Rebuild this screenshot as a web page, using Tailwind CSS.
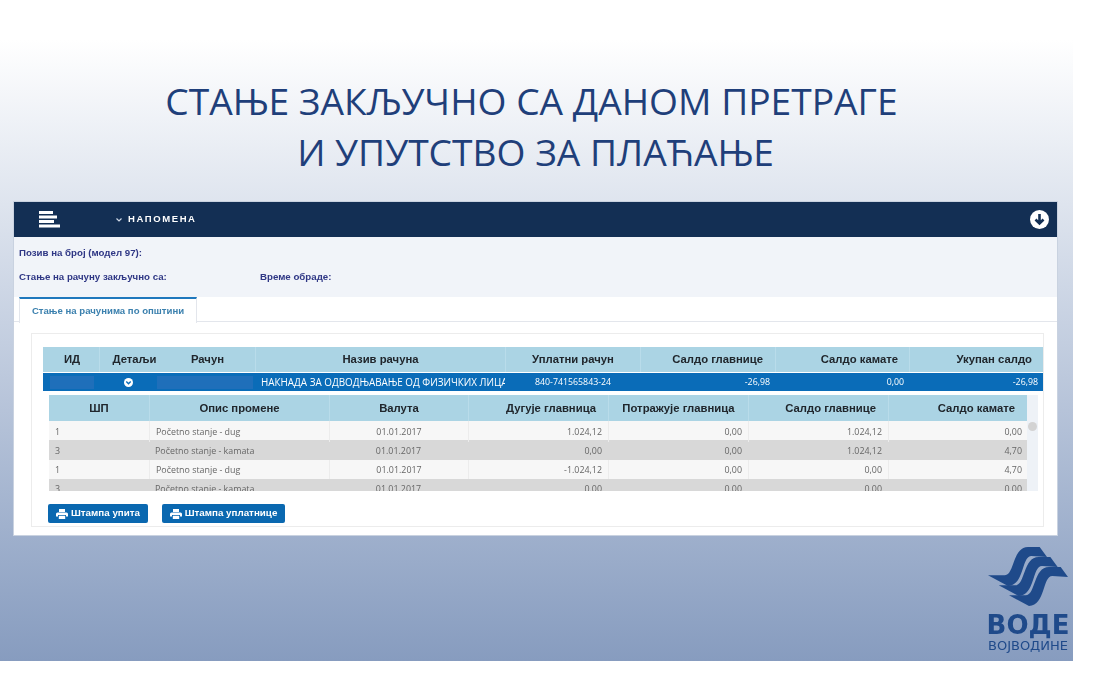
<!DOCTYPE html>
<html lang="en">
<head>
  <meta charset="UTF-8" />
  <title>Стање закључно са даном претраге</title>
  <script src="https://cdn.jsdelivr.net/npm/@tailwindcss/browser@4"></script>
</head>
<body class="bg-white">
  <div class="w-[1073px] h-[661px] overflow-hidden pt-[75px] bg-linear-to-b from-white from-[6%] to-[#879cbf]">

    <!-- Title -->
    <h1 class="text-center text-[#1f3f7a] text-[37.2px] leading-[51px] font-['Open_Sans',sans-serif]">
      <span class="block pr-[10px]">СТАЊЕ ЗАКЉУЧНО СА ДАНОМ ПРЕТРАГЕ</span>
      <span class="block pr-[2px]">И УПУТСТВО ЗА ПЛАЋАЊЕ</span>
    </h1>

    <!-- Screenshot card -->
    <div class="ml-[13px] mt-[24px] w-[1045px] h-[335px] bg-white border border-[#c9d2e0] font-['Liberation_Sans',sans-serif] blur-[0.4px]">

      <!-- Top bar -->
      <div class="h-[35px] bg-[#132f54] flex items-center text-white">
        <svg class="ml-[25px]" width="21" height="17" viewBox="0 0 21 17" fill="#fff">
          <rect x="0" y="0" width="14" height="3" />
          <rect x="0" y="4.5" width="18" height="3" />
          <rect x="0" y="9" width="15" height="3" />
          <rect x="0" y="13.5" width="21" height="3" />
        </svg>
        <svg class="ml-[56px]" width="6" height="4" viewBox="0 0 6 4" fill="none" stroke="#cfd8e6" stroke-width="1.2"><path d="M0.5 0.5L3 3L5.5 0.5" /></svg>
        <span class="ml-[6px] text-[9.5px] font-bold tracking-[1.6px]">НАПОМЕНА</span>
        <svg class="ml-auto mr-[8px]" width="19" height="19" viewBox="0 0 19 19">
          <circle cx="9.5" cy="9.5" r="9.5" fill="#fff" />
          <path d="M9.5 4V13.5M5.5 9.5L9.5 13.5L13.5 9.5" fill="none" stroke="#132f54" stroke-width="2.6" />
        </svg>
      </div>

      <!-- Info -->
      <div class="h-[60px] bg-[#f1f4f9] pl-[5px] pt-[10px] text-[9.7px] font-bold text-[#2f3785]">
        <div class="h-[12px] leading-[12px]">Позив на број (модел 97):</div>
        <div class="flex mt-[12px] h-[12px] leading-[12px]">
          <span class="w-[241px]">Стање на рачуну закључно са:</span>
          <span>Време обраде:</span>
        </div>
      </div>

      <!-- Tabs -->
      <div class="h-[25px] flex border-b border-[#e3e6ec]">
        <div class="ml-[5px] w-[178px] h-[26px] bg-white border-t-[2px] border-[#1f78bd] border-r border-r-[#e3e6ec] border-l border-l-[#e3e6ec] text-center text-[9.6px] leading-[23px] font-bold text-[#3b80ae]">
          Стање на рачунима по општини
        </div>
      </div>

      <!-- Panel -->
      <div class="ml-[17px] mt-[11px] w-[1013px] h-[194px] border border-[#ececec] pt-[13px] pl-[11px]">

        <!-- Main table -->
        <div class="grid grid-cols-[56px_58px_98px_250px_135px_135px_134px_135px] h-[25px] bg-[#abd4e4] text-[11.3px] font-bold text-[#20262c] leading-[25px]">
          <div class="text-center pl-[2px]">ИД</div>
          <div class="text-center pl-[12px] border-l border-[#b9dcea]">Детаљи</div>
          <div class="text-center pl-[3px]">Рачун</div>
          <div class="text-center border-l border-[#b9dcea]">Назив рачуна</div>
          <div class="text-center border-l border-[#b9dcea]">Уплатни рачун</div>
          <div class="text-right pr-[12px] border-l border-[#b9dcea]">Салдо главнице</div>
          <div class="text-right pr-[11px] border-l border-[#b9dcea]">Салдо камате</div>
          <div class="text-right pr-[12px] border-l border-[#b9dcea]">Укупан салдо</div>
        </div>
        <div class="grid grid-cols-[56px_58px_98px_250px_135px_135px_134px_135px] h-[18px] mt-[1px] bg-[#0a6cb8] text-white text-[8.8px] leading-[18px] font-['Open_Sans',sans-serif]">
          <div class="flex items-center justify-end pr-[5px]"><div class="w-[44px] h-[13px] bg-[#1f6fba]"></div></div>
          <div class="flex items-center justify-center">
            <svg width="9" height="9" viewBox="0 0 9 9"><circle cx="4.5" cy="4.5" r="4.5" fill="#fff" /><path d="M2.3 3.6L4.5 5.8L6.7 3.6" fill="none" stroke="#0a6cb8" stroke-width="1.4" /></svg>
          </div>
          <div class="flex items-center pr-[2px]"><div class="w-[96px] h-[13px] bg-[#1f6fba]"></div></div>
          <div class="pl-[6px] text-[9.9px] overflow-hidden whitespace-nowrap">НАКНАДА ЗА ОДВОДЊАВАЊЕ ОД ФИЗИЧКИХ ЛИЦА</div>
          <div class="pl-[30px]">840-741565843-24</div>
          <div class="text-right pr-[5px]">-26,98</div>
          <div class="text-right pr-[5px]">0,00</div>
          <div class="text-right pr-[6px]">-26,98</div>
        </div>

        <!-- Details table -->
        <div class="ml-[6px] mt-[4px] w-[989px] h-[96px] overflow-hidden flex">
          <div class="w-[978px]">
            <div class="grid grid-cols-[100px_180px_139px_140px_140px_140px_139px] h-[26px] bg-[#abd4e4] text-[11.3px] font-bold text-[#20262c] leading-[26px]">
              <div class="text-center">ШП</div>
              <div class="text-center border-l border-[#b9dcea]">Опис промене</div>
              <div class="text-center border-l border-[#b9dcea]">Валута</div>
              <div class="text-right pr-[12px] border-l border-[#b9dcea]">Дугује главница</div>
              <div class="text-center border-l border-[#b9dcea]">Потражује главница</div>
              <div class="text-right pr-[12px] border-l border-[#b9dcea]">Салдо главнице</div>
              <div class="text-right pr-[12px] border-l border-[#b9dcea]">Салдо камате</div>
            </div>
            <div class="grid grid-cols-[100px_180px_139px_140px_140px_140px_139px] h-[19px] bg-[#f7f7f7] text-[8.9px] leading-[21px] text-[#666] font-['Open_Sans',sans-serif]">
              <div class="pl-[6px]">1</div>
              <div class="pl-[6px] border-l border-[#ececec]">Početno stanje - dug</div>
              <div class="text-center border-l border-[#ececec]">01.01.2017</div>
              <div class="text-right pr-[6px] border-l border-[#ececec]">1.024,12</div>
              <div class="text-right pr-[6px] border-l border-[#ececec]">0,00</div>
              <div class="text-right pr-[6px] border-l border-[#ececec]">1.024,12</div>
              <div class="text-right pr-[5px] border-l border-[#ececec]">0,00</div>
            </div>
            <div class="grid grid-cols-[100px_180px_139px_140px_140px_140px_139px] h-[20px] bg-[#d8d8d8] text-[8.9px] leading-[21px] text-[#666] font-['Open_Sans',sans-serif]">
              <div class="pl-[6px]">3</div>
              <div class="pl-[6px]">Početno stanje - kamata</div>
              <div class="text-center">01.01.2017</div>
              <div class="text-right pr-[6px]">0,00</div>
              <div class="text-right pr-[6px]">0,00</div>
              <div class="text-right pr-[6px]">1.024,12</div>
              <div class="text-right pr-[5px]">4,70</div>
            </div>
            <div class="grid grid-cols-[100px_180px_139px_140px_140px_140px_139px] h-[19px] bg-[#f7f7f7] text-[8.9px] leading-[19px] text-[#666] font-['Open_Sans',sans-serif]">
              <div class="pl-[6px]">1</div>
              <div class="pl-[6px] border-l border-[#ececec]">Početno stanje - dug</div>
              <div class="text-center border-l border-[#ececec]">01.01.2017</div>
              <div class="text-right pr-[6px] border-l border-[#ececec]">-1.024,12</div>
              <div class="text-right pr-[6px] border-l border-[#ececec]">0,00</div>
              <div class="text-right pr-[6px] border-l border-[#ececec]">0,00</div>
              <div class="text-right pr-[5px] border-l border-[#ececec]">4,70</div>
            </div>
            <div class="grid grid-cols-[100px_180px_139px_140px_140px_140px_139px] h-[19px] bg-[#d8d8d8] text-[8.9px] leading-[19px] text-[#666] font-['Open_Sans',sans-serif]">
              <div class="pl-[6px]">3</div>
              <div class="pl-[6px]">Početno stanje - kamata</div>
              <div class="text-center">01.01.2017</div>
              <div class="text-right pr-[6px]">0.00</div>
              <div class="text-right pr-[6px]">0.00</div>
              <div class="text-right pr-[6px]">0.00</div>
              <div class="text-right pr-[5px]">0.00</div>
            </div>
          </div>
          <!-- Scrollbar -->
          <div class="w-[11px] bg-[#eef2f7] flex justify-center pt-[27px]">
            <div class="w-[9px] h-[9px] rounded-full bg-[#d3d3d3]"></div>
          </div>
        </div>

        <!-- Buttons -->
        <div class="ml-[5px] mt-[13px] flex gap-[14px]">
          <div class="w-[100px] h-[19px] bg-[#0a68b0] rounded-[2px] flex items-center justify-center gap-[3px] text-white text-[9.8px] font-bold">
            <svg width="12" height="10" viewBox="0 0 12 10" fill="#fff"><path d="M3 0H9V3H3ZM1.5 3.5H10.5Q12 3.5 12 5V7.5H10V6H2V7.5H0V5Q0 3.5 1.5 3.5ZM2.8 6.8H9.2V10H2.8Z" /></svg>
            Штампа упита
          </div>
          <div class="w-[123px] h-[19px] bg-[#0a68b0] rounded-[2px] flex items-center justify-center gap-[3px] text-white text-[9.8px] font-bold">
            <svg width="12" height="10" viewBox="0 0 12 10" fill="#fff"><path d="M3 0H9V3H3ZM1.5 3.5H10.5Q12 3.5 12 5V7.5H10V6H2V7.5H0V5Q0 3.5 1.5 3.5ZM2.8 6.8H9.2V10H2.8Z" /></svg>
            Штампа уплатнице
          </div>
        </div>
      </div>
    </div>

    <!-- Logo -->
    <div class="mt-[11px] ml-[985px] w-[86px] flex flex-col items-center text-[#1f4a8a] blur-[0.3px]">
      <svg width="80" height="59" viewBox="85 55 240 177" fill="#1f4a8a">
        <path d="M85 140L135 140C165 140 158 55 205 55L240 55L262 85L215 82C185 82 195 170 145 172Z" />
        <path d="M85 140L135 140C165 140 158 55 205 55L240 55L262 85L215 82C185 82 195 170 145 172Z" transform="translate(32 30)" />
        <path d="M85 140L135 140C165 140 158 55 205 55L240 55L262 85L215 82C185 82 195 170 145 172Z" transform="translate(63 60)" />
      </svg>
      <div class="text-[26px] leading-[24px] font-bold mt-[7px] font-['DejaVu_Sans',sans-serif]">ВОДЕ</div>
      <div class="text-[13px] leading-[13px] mt-[2px] whitespace-nowrap font-['DejaVu_Sans',sans-serif]">ВОЈВОДИНЕ</div>
    </div>
  </div>
</body>
</html>
